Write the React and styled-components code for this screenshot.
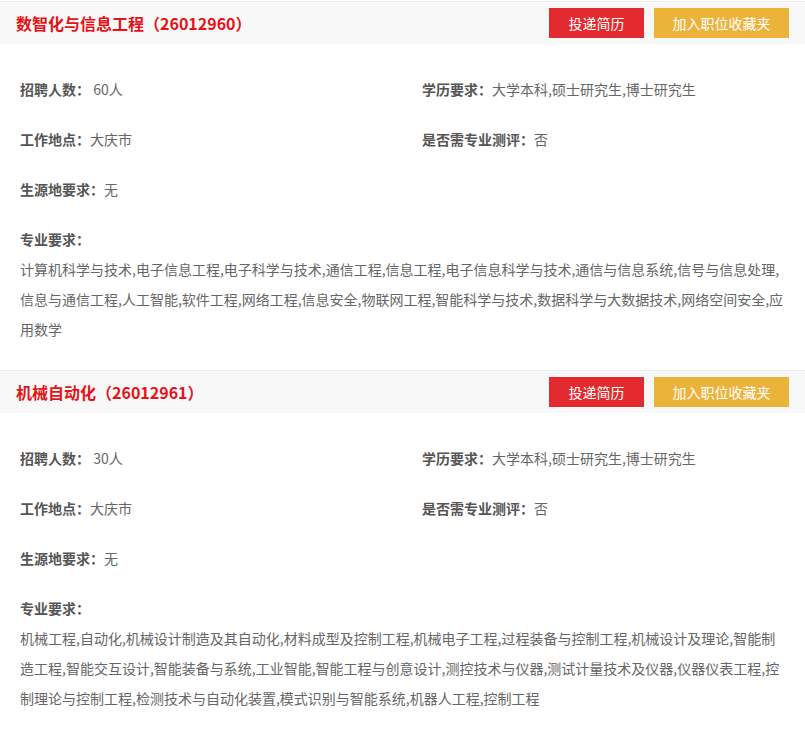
import React from "react"
import styled, { createGlobalStyle } from "styled-components"

const GlobalStyle = createGlobalStyle`
  body {
    margin: 0;
    background: #fff;
    font-family: "Noto Sans CJK SC", "Noto Sans", sans-serif;
  }
`

const List = styled.div`
  width: 805px;
  padding-top: 1px;
`

const Card = styled.div`
  border-top: 1px solid #ececec;
`

const Header = styled.div`
  display: flex;
  align-items: center;
  justify-content: space-between;
  height: 42px;
  padding: 0 16px;
  background: #f8f8f8;
`

const Title = styled.h3`
  margin: 0;
  font-size: 16px;
  font-weight: bold;
  color: #e4131a;
`

const Actions = styled.div`
  display: flex;
  gap: 10px;
`

const Button = styled.button`
  height: 30px;
  width: ${props => props.$wide ? "135px" : "95px"};
  border: none;
  padding: 0;
  color: #fff;
  font-family: inherit;
  font-size: 14px;
  background: ${props => props.$wide ? "#ecb33b" : "#e32b2f"};
  cursor: pointer;
`

const Body = styled.div`
  padding: 20px 20px 26px;
`

const Grid = styled.div`
  display: grid;
  grid-template-columns: 402px 1fr;
`

const Field = styled.div`
  line-height: 50px;
  font-size: 14px;
  color: #666;
  white-space: nowrap;
`

const Label = styled.span`
  font-weight: bold;
  color: #555;
`

const Majors = styled.div`
  margin-top: 10px;
  font-size: 14px;
  line-height: 30px;
  color: #666;
`

const jobs = [
  {
    name: "数智化与信息工程",
    code: "26012960",
    count: "60人",
    edu: "大学本科,硕士研究生,博士研究生",
    place: "大庆市",
    test: "否",
    origin: "无",
    majors: "计算机科学与技术,电子信息工程,电子科学与技术,通信工程,信息工程,电子信息科学与技术,通信与信息系统,信号与信息处理,信息与通信工程,人工智能,软件工程,网络工程,信息安全,物联网工程,智能科学与技术,数据科学与大数据技术,网络空间安全,应用数学",
  },
  {
    name: "机械自动化",
    code: "26012961",
    count: "30人",
    edu: "大学本科,硕士研究生,博士研究生",
    place: "大庆市",
    test: "否",
    origin: "无",
    majors: "机械工程,自动化,机械设计制造及其自动化,材料成型及控制工程,机械电子工程,过程装备与控制工程,机械设计及理论,智能制造工程,智能交互设计,智能装备与系统,工业智能,智能工程与创意设计,测控技术与仪器,测试计量技术及仪器,仪器仪表工程,控制理论与控制工程,检测技术与自动化装置,模式识别与智能系统,机器人工程,控制工程",
  },
]

const JobCard = ({ job }) => (
  <Card>
    <Header>
      <Title>{job.name}（{job.code}）</Title>
      <Actions>
        <Button>投递简历</Button>
        <Button $wide>加入职位收藏夹</Button>
      </Actions>
    </Header>
    <Body>
      <Grid>
        <Field><Label>招聘人数：</Label> {job.count}</Field>
        <Field><Label>学历要求：</Label>{job.edu}</Field>
        <Field><Label>工作地点：</Label>{job.place}</Field>
        <Field><Label>是否需专业测评：</Label>{job.test}</Field>
        <Field><Label>生源地要求：</Label>{job.origin}</Field>
      </Grid>
      <Majors>
        <Label>专业要求：</Label>
        <div>{job.majors}</div>
      </Majors>
    </Body>
  </Card>
)

const App = () => (
  <>
    <GlobalStyle />
    <List>
      {jobs.map(job => <JobCard key={job.code} job={job} />)}
    </List>
  </>
)

export default App
